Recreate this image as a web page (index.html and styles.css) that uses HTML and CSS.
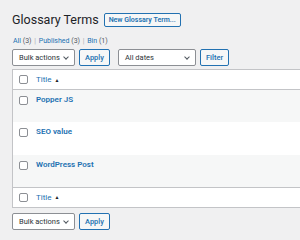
FILE: index.html
```html
<!DOCTYPE html>
<html>
<head>
<meta charset="utf-8">
<link rel="stylesheet" href="styles.css">
</head>
<body>
<div class="wrap">
  <div class="head">
    <h1 class="title">Glossary Terms</h1>
    <a class="btn btn-new">New Glossary Term...</a>
  </div>
  <div class="subsub">
    <a>All</a> <span class="count">(3)</span> <span class="sep">|</span>
    <a>Published</a> <span class="count">(3)</span> <span class="sep">|</span>
    <a>Bin</a> <span class="count">(1)</span>
  </div>
  <div class="actions">
    <div class="select sel-bulk">Bulk actions<span class="chev"></span></div>
    <a class="btn">Apply</a>
    <div class="select sel-dates">All dates<span class="chev"></span></div>
    <a class="btn">Filter</a>
  </div>
  <div class="table">
    <div class="row row-head">
      <span class="cb"></span><a class="col-title">Title</a><span class="sort">&#9650;</span>
    </div>
    <div class="row row-item striped">
      <span class="cb"></span><a class="item">Popper JS</a>
    </div>
    <div class="row row-item">
      <span class="cb"></span><a class="item">SEO value</a>
    </div>
    <div class="row row-item striped">
      <span class="cb"></span><a class="item">WordPress Post</a>
    </div>
    <div class="row row-foot">
      <span class="cb"></span><a class="col-title">Title</a><span class="sort">&#9650;</span>
    </div>
  </div>
  <div class="actions actions-bottom">
    <div class="select sel-bulk">Bulk actions<span class="chev"></span></div>
    <a class="btn">Apply</a>
  </div>
</div>
</body>
</html>
```
FILE: styles.css
```css
html, body {
  margin: 0;
  padding: 0;
  background: #f0f0f1;
  font-family: Roboto, "Noto Sans", sans-serif;
  color: #3c434a;
}
.wrap {
  padding: 9px 0 0 12px;
  overflow: hidden;
  height: 231px;
}
.head {
  display: flex;
  align-items: center;
  gap: 5px;
  height: 22px;
}
.title {
  margin: 0;
  font-size: 12.5px;
  font-weight: 400;
  color: #1d2327;
  line-height: 20px;
}
.btn {
  display: inline-flex;
  align-items: center;
  justify-content: center;
  box-sizing: border-box;
  height: 17px;
  padding: 0 5px;
  border: 1px solid #2271b1;
  border-radius: 2px;
  background: #f6f7f7;
  color: #2271b1;
  font-size: 7.5px;
  font-weight: 500;
}
.btn-new {
  height: 14px;
  padding: 0 4px;
  font-size: 7px;
  font-weight: 600;
}
.subsub {
  margin-top: 4px;
  font-size: 7px;
  line-height: 12px;
  color: #50575e;
  padding-left: 1px;
}
.subsub a { color: #2271b1; }
.subsub .count { color: #50575e; }
.subsub .sep { color: #a7aaad; margin: 0 1px; }
.actions {
  display: flex;
  align-items: center;
  gap: 4px;
  margin-top: 2px;
  height: 17px;
}
.select {
  box-sizing: border-box;
  height: 17px;
  display: flex;
  align-items: center;
  padding-left: 6px;
  background: #fff;
  border: 1px solid #8c8f94;
  border-radius: 2px;
  font-size: 7.5px;
  color: #2c3338;
  position: relative;
}
.sel-bulk { width: 63px; }
.sel-dates { width: 78px; margin-left: 4px; }
.chev {
  position: absolute;
  right: 6px;
  top: 5px;
  width: 3px;
  height: 3px;
  border-right: 1px solid #50575e;
  border-bottom: 1px solid #50575e;
  transform: rotate(45deg);
}
.table {
  margin-top: 3px;
  background: #fff;
  border: 1px solid #c3c4c7;
  border-right: none;
  box-sizing: border-box;
}
.row {
  display: flex;
  align-items: center;
  padding-left: 6px;
}
.row-head {
  height: 19px;
  border-bottom: 1px solid #c3c4c7;
}
.row-foot {
  height: 19px;
  border-top: 1px solid #c3c4c7;
}
.row-item {
  height: 32.33px;
  align-items: flex-start;
}
.striped { background: #f6f7f7; }
.cb {
  box-sizing: border-box;
  width: 9px;
  height: 9px;
  border: 1px solid #8c8f94;
  border-radius: 2px;
  background: #fff;
  flex: none;
}
.row-item .cb { margin-top: 6px; }
.col-title {
  margin-left: 8px;
  font-size: 8px;
  color: #2271b1;
}
.sort {
  font-size: 5px;
  color: #1d2327;
  margin-left: 3px;
}
.item {
  margin-left: 8px;
  margin-top: 5px;
  font-size: 8px;
  line-height: 9px;
  font-weight: 600;
  color: #2271b1;
}
.actions-bottom {
  margin-top: 5px;
}
```
